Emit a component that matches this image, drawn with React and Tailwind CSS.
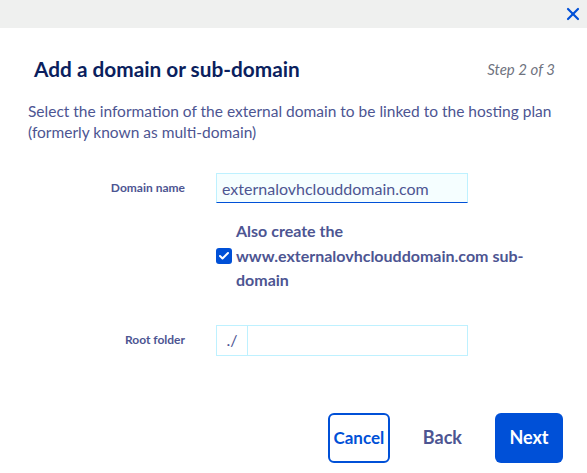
import React, { useState } from 'react';
import { X, Check } from 'lucide-react';

export default function App() {
  const [domain, setDomain] = useState('externalovhclouddomain.com');
  const [createWww, setCreateWww] = useState(true);
  const [folder, setFolder] = useState('');

  return (
    <div className="w-[587px] h-[473px] bg-white overflow-hidden" style={{ fontFamily: 'Lato, "Noto Sans", sans-serif' }}>
      {/* Top bar */}
      <div className="h-[28px] bg-[#eff0ef] flex items-center justify-end pr-[4px]">
        <button className="text-[#0050d7] p-0">
          <X size={20} strokeWidth={2.6} />
        </button>
      </div>

      {/* Header */}
      <div className="flex items-center justify-between mt-[27px] pl-[34px] pr-[32px] h-[28px]">
        <h2 className="text-[20.8px] font-bold text-[#0b1f5e] leading-[28px]">Add a domain or sub-domain</h2>
        <span className="text-[15px] italic text-[#6f7380]">Step 2 of 3</span>
      </div>

      {/* Description */}
      <p className="mt-[18px] pl-[28px] pr-[8px] text-[15.5px] leading-[21px] text-[#4d5592]">
        Select the information of the external domain to be linked to the hosting plan (formerly known as multi-domain)
      </p>

      {/* Form */}
      <div className="mt-[30px] flex flex-col">
        <div className="flex items-center h-[30px]">
          <label className="w-[186px] text-right pr-[1px] text-[12px] font-bold text-[#4d5592]">Domain name</label>
          <input
            value={domain}
            onChange={(e) => setDomain(e.target.value)}
            className="ml-[30px] w-[252px] h-[30px] bg-[#f5feff] border border-[#bef1ff] border-b-[#0050d7] px-[5px] text-[16px] text-[#4d5592] outline-none"
          />
        </div>

        <div className="flex items-center ml-[216px] mt-[16px] w-[330px]">
          <button
            onClick={() => setCreateWww(!createWww)}
            className="w-[16px] h-[16px] rounded-[3px] bg-[#0050d7] flex items-center justify-center shrink-0"
          >
            {createWww && <Check size={12} strokeWidth={4} className="text-white" />}
          </button>
          <span className="ml-[4px] text-[16px] font-bold leading-[24.5px] text-[#4d5592]">
            Also create the www.externalovhclouddomain.com sub-domain
          </span>
        </div>

        <div className="flex items-center h-[31px] mt-[32px]">
          <label className="w-[186px] text-right pr-[1px] text-[12px] font-bold text-[#4d5592]">Root folder</label>
          <div className="ml-[30px] w-[252px] h-[31px] flex border border-[#bef1ff]">
            <span className="w-[31px] flex items-center justify-center border-r border-[#bef1ff] text-[16px] text-[#4d5592]">./</span>
            <input
              value={folder}
              onChange={(e) => setFolder(e.target.value)}
              className="flex-1 px-[5px] text-[16px] text-[#4d5592] outline-none"
            />
          </div>
        </div>
      </div>

      {/* Actions */}
      <div className="mt-[57px] flex items-center justify-end pr-[24px]">
        <button className="w-[62px] h-[50px] rounded-[6px] border-2 border-[#0050d7] text-[#0050d7] text-[17px] font-bold">Cancel</button>
        <button className="ml-[33px] text-[18px] font-bold text-[#4d5592]">Back</button>
        <button className="ml-[33px] w-[68px] h-[50px] rounded-[6px] bg-[#0050d7] text-white text-[18px] font-bold">Next</button>
      </div>
    </div>
  );
}
